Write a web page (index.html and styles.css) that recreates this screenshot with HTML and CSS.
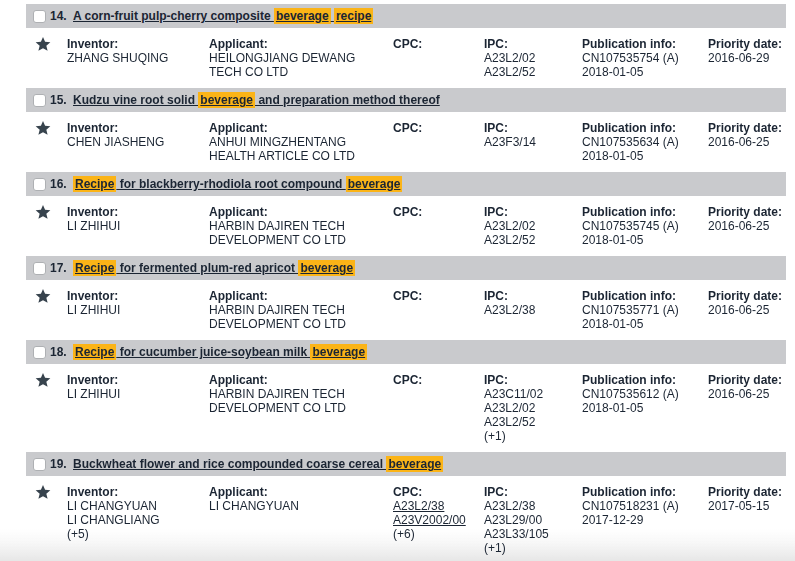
FILE: index.html
```html
<!DOCTYPE html>
<html>
<head>
<meta charset="utf-8">
<link rel="stylesheet" href="styles.css">
</head>
<body>
<div class="list">

  <div class="result">
    <div class="head"><span class="check"></span><span class="num">14.</span><a class="title" href="#">A corn-fruit pulp-cherry composite <mark>beverage</mark> <mark>recipe</mark></a></div>
    <div class="body">
      <div class="star"><svg viewBox="0 0 24 24" width="16" height="16"><path d="M12 1.5l3.1 7.3 7.9.6-6 5.2 1.9 7.7L12 18.2l-6.9 4.1 1.9-7.7-6-5.2 7.9-.6z" fill="#37434d"/></svg></div>
      <div class="col"><b>Inventor:</b><span>ZHANG SHUQING</span></div>
      <div class="col app"><b>Applicant:</b><span>HEILONGJIANG DEWANG TECH CO LTD</span></div>
      <div class="col"><b>CPC:</b></div>
      <div class="col"><b>IPC:</b><span>A23L2/02</span><span>A23L2/52</span></div>
      <div class="col"><b>Publication info:</b><span>CN107535754 (A)</span><span>2018-01-05</span></div>
      <div class="col"><b>Priority date:</b><span>2016-06-29</span></div>
    </div>
  </div>

  <div class="result">
    <div class="head"><span class="check"></span><span class="num">15.</span><a class="title" href="#">Kudzu vine root solid <mark>beverage</mark> and preparation method thereof</a></div>
    <div class="body">
      <div class="star"><svg viewBox="0 0 24 24" width="16" height="16"><path d="M12 1.5l3.1 7.3 7.9.6-6 5.2 1.9 7.7L12 18.2l-6.9 4.1 1.9-7.7-6-5.2 7.9-.6z" fill="#37434d"/></svg></div>
      <div class="col"><b>Inventor:</b><span>CHEN JIASHENG</span></div>
      <div class="col app"><b>Applicant:</b><span>ANHUI MINGZHENTANG HEALTH ARTICLE CO LTD</span></div>
      <div class="col"><b>CPC:</b></div>
      <div class="col"><b>IPC:</b><span>A23F3/14</span></div>
      <div class="col"><b>Publication info:</b><span>CN107535634 (A)</span><span>2018-01-05</span></div>
      <div class="col"><b>Priority date:</b><span>2016-06-25</span></div>
    </div>
  </div>

  <div class="result">
    <div class="head"><span class="check"></span><span class="num">16.</span><a class="title" href="#"><mark>Recipe</mark> for blackberry-rhodiola root compound <mark>beverage</mark></a></div>
    <div class="body">
      <div class="star"><svg viewBox="0 0 24 24" width="16" height="16"><path d="M12 1.5l3.1 7.3 7.9.6-6 5.2 1.9 7.7L12 18.2l-6.9 4.1 1.9-7.7-6-5.2 7.9-.6z" fill="#37434d"/></svg></div>
      <div class="col"><b>Inventor:</b><span>LI ZHIHUI</span></div>
      <div class="col app"><b>Applicant:</b><span>HARBIN DAJIREN TECH DEVELOPMENT CO LTD</span></div>
      <div class="col"><b>CPC:</b></div>
      <div class="col"><b>IPC:</b><span>A23L2/02</span><span>A23L2/52</span></div>
      <div class="col"><b>Publication info:</b><span>CN107535745 (A)</span><span>2018-01-05</span></div>
      <div class="col"><b>Priority date:</b><span>2016-06-25</span></div>
    </div>
  </div>

  <div class="result">
    <div class="head"><span class="check"></span><span class="num">17.</span><a class="title" href="#"><mark>Recipe</mark> for fermented plum-red apricot <mark>beverage</mark></a></div>
    <div class="body">
      <div class="star"><svg viewBox="0 0 24 24" width="16" height="16"><path d="M12 1.5l3.1 7.3 7.9.6-6 5.2 1.9 7.7L12 18.2l-6.9 4.1 1.9-7.7-6-5.2 7.9-.6z" fill="#37434d"/></svg></div>
      <div class="col"><b>Inventor:</b><span>LI ZHIHUI</span></div>
      <div class="col app"><b>Applicant:</b><span>HARBIN DAJIREN TECH DEVELOPMENT CO LTD</span></div>
      <div class="col"><b>CPC:</b></div>
      <div class="col"><b>IPC:</b><span>A23L2/38</span></div>
      <div class="col"><b>Publication info:</b><span>CN107535771 (A)</span><span>2018-01-05</span></div>
      <div class="col"><b>Priority date:</b><span>2016-06-25</span></div>
    </div>
  </div>

  <div class="result">
    <div class="head"><span class="check"></span><span class="num">18.</span><a class="title" href="#"><mark>Recipe</mark> for cucumber juice-soybean milk <mark>beverage</mark></a></div>
    <div class="body">
      <div class="star"><svg viewBox="0 0 24 24" width="16" height="16"><path d="M12 1.5l3.1 7.3 7.9.6-6 5.2 1.9 7.7L12 18.2l-6.9 4.1 1.9-7.7-6-5.2 7.9-.6z" fill="#37434d"/></svg></div>
      <div class="col"><b>Inventor:</b><span>LI ZHIHUI</span></div>
      <div class="col app"><b>Applicant:</b><span>HARBIN DAJIREN TECH DEVELOPMENT CO LTD</span></div>
      <div class="col"><b>CPC:</b></div>
      <div class="col"><b>IPC:</b><span>A23C11/02</span><span>A23L2/02</span><span>A23L2/52</span><span>(+1)</span></div>
      <div class="col"><b>Publication info:</b><span>CN107535612 (A)</span><span>2018-01-05</span></div>
      <div class="col"><b>Priority date:</b><span>2016-06-25</span></div>
    </div>
  </div>

  <div class="result">
    <div class="head"><span class="check"></span><span class="num">19.</span><a class="title" href="#">Buckwheat flower and rice compounded coarse cereal <mark>beverage</mark></a></div>
    <div class="body">
      <div class="star"><svg viewBox="0 0 24 24" width="16" height="16"><path d="M12 1.5l3.1 7.3 7.9.6-6 5.2 1.9 7.7L12 18.2l-6.9 4.1 1.9-7.7-6-5.2 7.9-.6z" fill="#37434d"/></svg></div>
      <div class="col"><b>Inventor:</b><span>LI CHANGYUAN</span><span>LI CHANGLIANG</span><span>(+5)</span></div>
      <div class="col app"><b>Applicant:</b><span>LI CHANGYUAN</span></div>
      <div class="col"><b>CPC:</b><a href="#">A23L2/38</a><a href="#">A23V2002/00</a><span>(+6)</span></div>
      <div class="col"><b>IPC:</b><span>A23L2/38</span><span>A23L29/00</span><span>A23L33/105</span><span>(+1)</span></div>
      <div class="col"><b>Publication info:</b><span>CN107518231 (A)</span><span>2017-12-29</span></div>
      <div class="col"><b>Priority date:</b><span>2017-05-15</span></div>
    </div>
  </div>

</div>
<div class="fade"></div>
</body>
</html>
```

FILE: styles.css
```css
html, body {
  margin: 0;
  padding: 0;
  background: #ffffff;
}
body {
  font-family: "Liberation Sans", Arial, sans-serif;
  font-size: 12px;
  line-height: 14px;
  color: #1b2533;
  overflow: hidden;
}
.list {
  width: 760px;
  margin-left: 26px;
  padding-top: 4px;
  position: relative;
  z-index: 1;
}
.head {
  height: 24px;
  background: #c9cacd;
  display: flex;
  align-items: center;
  padding-left: 7px;
  font-weight: bold;
}
.check {
  width: 11px;
  height: 11px;
  border: 1px solid #aeb0b3;
  border-radius: 3px;
  background: #ffffff;
  flex: none;
}
.num {
  margin-left: 4px;
  width: 23px;
  flex: none;
}
.title {
  color: #1b2533;
  text-decoration: underline;
  white-space: nowrap;
}
.title mark {
  background: #fbb417;
  color: #1b2533;
  padding: 1px 2px;
}
.body {
  display: grid;
  grid-template-columns: 41px 142px 184px 91px 98px 126px 78px;
  padding: 9px 0 9px;
}
.star {
  padding-left: 9px;
  margin-top: -1px;
  line-height: 0;
}
.col {
  display: flex;
  flex-direction: column;
  white-space: nowrap;
}
.col b {
  font-weight: bold;
}
.app span {
  white-space: normal;
  max-width: 152px;
}
.col a {
  color: #1b2533;
  text-decoration: underline;
}
.fade {
  position: fixed;
  left: 0;
  right: 0;
  bottom: 0;
  height: 32px;
  z-index: 0;
  background: linear-gradient(to bottom, rgba(228,228,228,0) 0%, rgba(228,228,228,0.3) 45%, rgba(228,228,228,0.9) 100%);
  pointer-events: none;
}
```
